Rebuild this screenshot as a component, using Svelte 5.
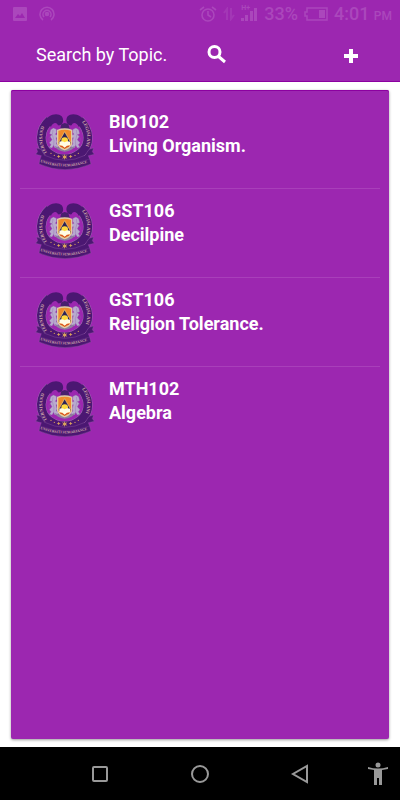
<script>
  let query = $state("");

  const topics = [
    { code: "BIO102", title: "Living Organism." },
    { code: "GST106", title: "Decilpine" },
    { code: "GST106", title: "Religion Tolerance." },
    { code: "MTH102", title: "Algebra" },
  ];
</script>

{#snippet crest(id)}
  <svg class="crest" viewBox="15 15 180 180" aria-hidden="true">
    <defs>
      <path id="left-{id}" d="M52 144C31 115 32 82 52 50" />
      <path id="right-{id}" d="M156 50C176 80 178 113 156 145" />
      <path id="base-{id}" d="M31 171Q105 198 179 171" />
    </defs>

    <!-- wreath -->
    <path d="M59 46C28 73 24 121 57 146C82 167 125 167 150 146C184 120 179 74 149 46" fill="none" stroke="#a678b8" stroke-width="28" />
    <path d="M59 46C28 73 24 121 57 146C82 167 125 167 150 146C184 120 179 74 149 46" fill="none" stroke="#4b1772" stroke-width="26" />
    <path d="M43 54C50 29 82 21 95 34C105 46 97 64 84 61C79 50 69 53 63 65Z" fill="#4b1772" />
    <path d="M166 54C158 29 126 21 113 34C104 46 112 64 125 61C129 50 140 53 146 65Z" fill="#4b1772" />

    <!-- ribbon -->
    <path d="M33 133L19 129L23 140L17 148L34 152L30 163L27 177Q105 211 183 177L179 163L175 152L193 148L187 140L191 129L177 133L165 151Q105 181 44 151Z" fill="#4b1772" stroke="#9b65ad" stroke-width="1" />
    <path d="M30 162Q105 190 179 162" fill="none" stroke="#784497" />

    <g class="motto">
      <text><textPath href="#left-{id}">TERNISAND</textPath></text>
      <text><textPath href="#right-{id}">LEGISLANI</textPath></text>
      <text class="base"><textPath href="#base-{id}">UNIVERSITI SUMARIANCE</textPath></text>
    </g>

    <!-- supporters -->
    <g id="lion-{id}" fill="#b9a9cf" stroke="#8269a0" stroke-width="1">
      <path d="M62 74L70 69L79 73L80 82L76 88L83 91L84 98L78 98L81 110L79 117L85 121L84 128L74 128L71 121L66 129L58 127L63 119L58 113L66 104L60 94L66 89L59 86Z" />
      <path d="M69 75L67 89L72 107L71 121M62 93L56 101L59 109" fill="none" />
    </g>
    <use href="#lion-{id}" transform="matrix(-1 0 0 1 208 0)" />

    <!-- shield -->
    <path d="M91 70L94 58L104 54L115 57L119 71L105 76Z" fill="#49206d" />
    <path d="M74 123Q80 137 104 140Q129 137 135 123L124 127L104 130L84 127Z" fill="#8d819e" />
    <path d="M83 76Q104 68 125 76V116Q121 128 104 134Q87 128 83 116Z" fill="#ef8a2c" stroke="#e0cca7" stroke-width="4" />
    <path d="M104 80L122 112V118H86V112Z" fill="#2d2257" stroke="#f6cf76" stroke-width="2" />
    <circle cx="104" cy="107" r="10" fill="#ffda3d" />
    <path d="M88 110Q97 107 104 112Q111 107 120 110V121Q111 120 104 128Q97 120 88 121Z" fill="#fffbe5" />
    <path d="M91 124Q97 123 104 130Q111 123 117 124" fill="none" stroke="#d44e2a" stroke-width="3" />

    <!-- stars -->
    <g fill="#d9a35d">
      <path d="M104 147L106 153L112 151L108 156L112 161L106 159L104 165L102 159L96 161L100 156L96 151L102 153Z" />
      <path d="M86 149L88 153L92 154L88 156L86 160L84 156L80 154L84 153Z" />
      <path d="M122 149L124 153L128 154L124 156L122 160L120 156L116 154L120 153Z" />
      <circle cx="73" cy="151" r="2" />
      <circle cx="63" cy="145" r="2" />
      <circle cx="135" cy="151" r="2" />
      <circle cx="145" cy="145" r="2" />
    </g>
  </svg>
{/snippet}

<div class="screen">
  <header class="app-bar">
    <div class="status">
      <div class="status-group notifications">
        <svg width="14" height="16" viewBox="0 0 14 16" aria-hidden="true">
          <path fill="currentColor" fill-rule="evenodd" d="M1 1H13Q14 1 14 2V14Q14 15 13 15H1Q0 15 0 14V2Q0 1 1 1ZM2 12H12L9 7L7 10L5 8Z" />
        </svg>
        <svg width="16" height="16" viewBox="0 0 16 16" fill="none" stroke="currentColor" stroke-width="1.6" aria-hidden="true">
          <path d="M4 14A7 7 0 1 1 12 14M5 11A4 4 0 1 1 11 11" />
          <circle cx="8" cy="8" r="1.5" fill="currentColor" />
        </svg>
      </div>
      <div class="status-group">
        <svg width="18" height="16" viewBox="0 0 18 16" fill="none" stroke="currentColor" stroke-width="1.6" aria-hidden="true">
          <circle cx="9" cy="9" r="6" />
          <path d="M1 4L5 1M17 4L13 1M9 5V9L12 11" />
        </svg>
        <svg class="dim" width="12" height="14" viewBox="0 0 12 14" fill="none" stroke="currentColor" stroke-width="2" aria-hidden="true">
          <path d="M4 13V2L1 6M8 1V12L11 8" />
        </svg>
        <span class="signal">
          <span class="network">H+</span>
          <svg width="17" height="16" viewBox="0 0 17 16" aria-hidden="true">
            <path d="M0 12H3V15H0ZM4 9H7V15H4ZM9 5H12V15H9ZM13 2H16V15H13Z" fill="currentColor" />
          </svg>
        </span>
        <span class="percent">33%</span>
        <svg width="24" height="14" viewBox="0 0 24 14" aria-hidden="true">
          <path d="M3 1H23V13H3V9H1V5H3Z" fill="none" stroke="currentColor" stroke-width="1.5" />
          <path d="M15 3H21V11H15Z" fill="currentColor" />
        </svg>
        <span class="clock">4:01 <small>PM</small></span>
      </div>
    </div>

    <div class="toolbar">
      <form class="search" onsubmit={(e) => e.preventDefault()}>
        <input type="text" placeholder="Search by Topic." aria-label="Search by Topic." bind:value={query} />
        <button type="submit" aria-label="Search">
          <svg width="24" height="24" viewBox="0 0 24 24" aria-hidden="true">
            <path fill="none" stroke="currentColor" stroke-width="3" d="M15 9A5.500 5.500 0 1 1 4 9A5.500 5.500 0 1 1 15 9M13 13L20 19" />
          </svg>
        </button>
      </form>
      <button class="add" type="button" aria-label="Add topic">
        <svg width="14" height="16" viewBox="0 0 14 16" aria-hidden="true">
          <path d="M5 2H9V7H14V11H9V16H5V11H0V7H5Z" fill="currentColor" />
        </svg>
      </button>
    </div>
  </header>

  <main>
    <ul class="topics">
      {#each topics as topic, i}
        <li class="topic">
          {@render crest(i)}
          <div class="topic-text">
            <h2>{topic.code}</h2>
            <p>{topic.title}</p>
          </div>
        </li>
      {/each}
    </ul>
  </main>

  <nav class="system-nav" aria-label="System navigation">
    <button type="button" aria-label="Recent apps">
      <svg width="20" height="20" viewBox="0 0 20 20" aria-hidden="true">
        <rect x="3" y="3" width="14" height="14" rx="1" />
      </svg>
    </button>
    <button type="button" aria-label="Home">
      <svg width="20" height="20" viewBox="0 0 20 20" aria-hidden="true">
        <circle cx="10" cy="10" r="8" />
      </svg>
    </button>
    <button type="button" aria-label="Back">
      <svg width="20" height="20" viewBox="0 0 20 20" aria-hidden="true">
        <path d="M17 2V18L3 10Z" />
      </svg>
    </button>
    <button class="accessibility" type="button" aria-label="Accessibility">
      <svg width="20" height="24" viewBox="0 0 20 24" aria-hidden="true">
        <circle cx="10" cy="3" r="2.500" />
        <path d="M0 5Q10 8 20 5V7L14 8V23H11V16H9V23H6V8L0 7Z" />
      </svg>
    </button>
  </nav>
</div>

<style>
  :global(body) {
    background: #fff;
  }

  .screen {
    display: flex;
    flex-direction: column;
    min-height: 100vh;
    font-family: Roboto, sans-serif;
    color: #fff;
  }

  button {
    display: flex;
    align-items: center;
    justify-content: center;
    padding: 0;
    border: 0;
    background: none;
    color: inherit;
    cursor: pointer;
  }

  .app-bar {
    background: #9c27b0;
    border-bottom: 1px solid #8c00a0;
  }

  .status {
    display: flex;
    justify-content: space-between;
    align-items: center;
    height: 28px;
    padding: 0 8px 0 13px;
    color: #ab47bc;
  }

  .status-group {
    display: flex;
    align-items: center;
    gap: 6px;
  }

  .notifications {
    gap: 12px;
  }

  .dim {
    opacity: 0.5;
  }

  .signal {
    position: relative;
    display: flex;
  }

  .network {
    position: absolute;
    top: -2px;
    left: 0;
    font-size: 7px;
    line-height: 8px;
    font-weight: 700;
  }

  .percent,
  .clock {
    font-size: 18px;
    line-height: 28px;
    font-weight: 500;
  }

  .clock small {
    font-size: 12px;
    line-height: 12px;
  }

  .toolbar {
    display: flex;
    align-items: center;
    justify-content: space-between;
    height: 53px;
    padding: 0 42px 0 36px;
  }

  .search {
    display: flex;
    align-items: center;
    gap: 9px;
  }

  .search input {
    width: 160px;
    height: 40px;
    padding: 0;
    border: 0;
    outline: 0;
    background: none;
    color: #fff;
    font: 18px/24px Roboto, sans-serif;
  }

  .search input::placeholder {
    color: #fff;
    opacity: 1;
  }

  main {
    display: flex;
    flex: 1;
    padding: 8px 11px;
  }

  .topics {
    flex: 1;
    margin: 0;
    padding: 10px 9px;
    list-style: none;
    background: #9c27b0;
    border-radius: 2px;
    box-shadow:
      0 1px 3px rgba(0, 0, 0, 0.4),
      inset 0 1px #8c00a0;
  }

  .topic {
    display: flex;
    gap: 14px;
    padding: 10px 15px 18px;
    border-bottom: 1px solid #a93fba;
  }

  .topic:last-child {
    border-bottom: 0;
  }

  .crest {
    flex: none;
    width: 60px;
    height: 60px;
  }

  .motto {
    font: 700 14px "Liberation Serif", serif;
    fill: #d3a9ab;
  }

  .motto .base {
    font-size: 11px;
  }

  .topic h2,
  .topic p {
    margin: 0;
    font-size: 18px;
    line-height: 24px;
    font-weight: 700;
  }

  .system-nav {
    display: grid;
    grid-template-columns: repeat(8, 1fr);
    height: 53px;
    background: #000;
    color: #999;
  }

  .system-nav button:first-child {
    grid-column: 2 / 4;
  }

  .system-nav button:nth-child(2) {
    grid-column: 4 / 6;
  }

  .system-nav button:nth-child(3) {
    grid-column: 6 / 8;
  }

  .system-nav svg {
    fill: none;
    stroke: currentColor;
    stroke-width: 2;
  }

  .system-nav .accessibility {
    padding-left: 5px;
  }

  .system-nav .accessibility svg {
    fill: currentColor;
    stroke: none;
  }
</style>
